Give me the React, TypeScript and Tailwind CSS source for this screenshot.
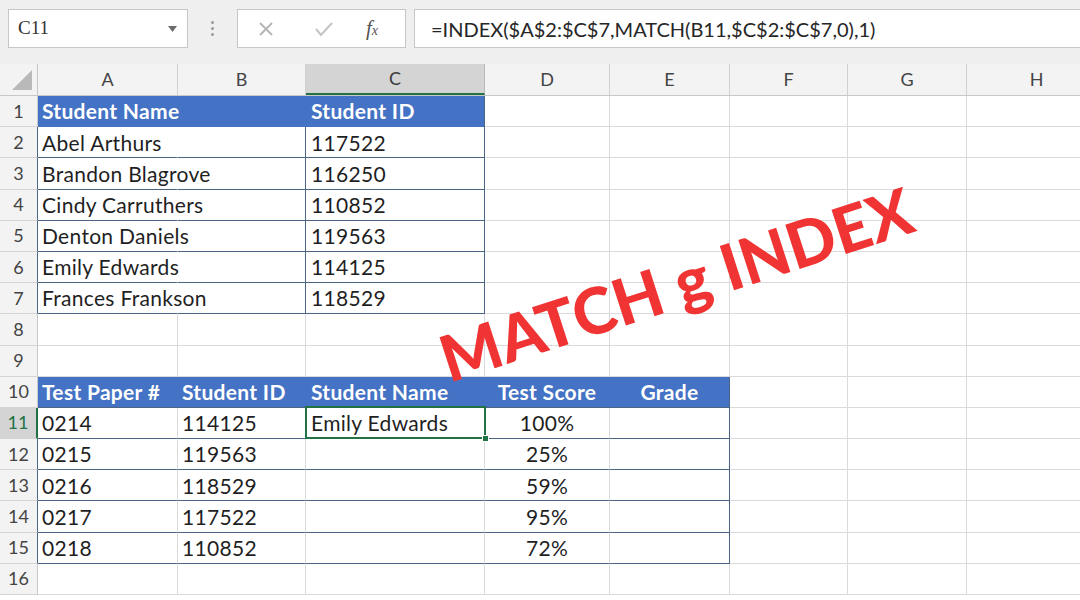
import React from 'react';

type CellDef = {
  t?: string;
  center?: boolean;
  head?: boolean;
  r?: 'grid' | 'tbl' | 'blue' | 'white';
  b?: 'grid' | 'tbl' | 'blue';
};

const colW = ['w-[140px]', 'w-[128px]', 'w-[179px]', 'w-[125px]', 'w-[120px]', 'w-[118px]', 'w-[119px]', 'w-[140px]'];
const letters = ['A', 'B', 'C', 'D', 'E', 'F', 'G', 'H'];

const rColor: Record<string, string> = {
  grid: 'border-r-[#dadada]',
  tbl: 'border-r-[#4d6584]',
  blue: 'border-r-[#4472c4]',
  white: 'border-r-white',
};
const bColor: Record<string, string> = {
  grid: 'border-b-[#dadada]',
  tbl: 'border-b-[#4d6584]',
  blue: 'border-b-[#4472c4]',
};

const names = ['Abel Arthurs', 'Brandon Blagrove', 'Cindy Carruthers', 'Denton Daniels', 'Emily Edwards', 'Frances Frankson'];
const ids = ['117522', '116250', '110852', '119563', '114125', '118529'];
const papers = ['0214', '0215', '0216', '0217', '0218'];
const sids = ['114125', '119563', '118529', '117522', '110852'];
const scores = ['100%', '25%', '59%', '95%', '72%'];

type RowDef = { cells: CellDef[]; hdr: 'grid' | 'tbl' | 'sel' };

function buildRows(): RowDef[] {
  const rows: RowDef[] = [];
  const empty = (): CellDef[] => letters.map(() => ({}));
  const r1 = empty();
  r1[0] = { t: 'Student Name', head: true, r: 'blue', b: 'blue' };
  r1[1] = { head: true, r: 'blue', b: 'blue' };
  r1[2] = { t: 'Student ID', head: true, r: 'tbl', b: 'blue' };
  rows.push({ cells: r1, hdr: 'grid' });
  for (let i = 0; i < 6; i++) {
    const r = empty();
    r[0] = { t: names[i], r: 'white', b: 'tbl' };
    r[1] = { r: 'tbl', b: 'tbl' };
    r[2] = { t: ids[i], r: 'tbl', b: 'tbl' };
    rows.push({ cells: r, hdr: 'tbl' });
  }
  rows.push({ cells: empty(), hdr: 'grid' });
  rows.push({ cells: empty(), hdr: 'grid' });
  const r10 = empty();
  r10[0] = { t: 'Test Paper #', head: true, r: 'blue', b: 'tbl' };
  r10[1] = { t: 'Student ID', head: true, r: 'blue', b: 'tbl' };
  r10[2] = { t: 'Student Name', head: true, r: 'blue', b: 'tbl' };
  r10[3] = { t: 'Test Score', head: true, center: true, r: 'blue', b: 'tbl' };
  r10[4] = { t: 'Grade', head: true, center: true, r: 'tbl', b: 'tbl' };
  rows.push({ cells: r10, hdr: 'grid' });
  for (let i = 0; i < 5; i++) {
    const r = empty();
    r[0] = { t: papers[i], r: 'grid', b: 'tbl' };
    r[1] = { t: sids[i], r: 'grid', b: 'tbl' };
    r[2] = { t: i === 0 ? 'Emily Edwards' : undefined, r: 'grid', b: 'tbl' };
    r[3] = { t: scores[i], center: true, r: 'grid', b: 'tbl' };
    r[4] = { r: 'tbl', b: 'tbl' };
    rows.push({ cells: r, hdr: i === 0 ? 'sel' : 'tbl' });
  }
  rows.push({ cells: empty(), hdr: 'grid' });
  return rows;
}

function Toolbar() {
  return (
    <div className="h-[64px] bg-[#efefef] flex items-start pt-[9px] shrink-0">
      <div className="ml-[8px] w-[180px] h-[39px] shrink-0 bg-white border border-[#c6c6c6] flex items-center justify-between pl-[9px] pr-[10px]">
        <span className="text-[19px] text-[#333] font-['Liberation_Serif',serif]">C11</span>
        <svg width="9" height="6" viewBox="0 0 9 6"><path d="M0 0 L9 0 L4.5 6 Z" fill="#6b6b6b" /></svg>
      </div>
      <div className="w-[49px] h-[39px] shrink-0 flex flex-col items-center justify-center gap-[3px]">
        <div className="w-[3px] h-[3px] rounded-full bg-[#9a9a9a]" />
        <div className="w-[3px] h-[3px] rounded-full bg-[#9a9a9a]" />
        <div className="w-[3px] h-[3px] rounded-full bg-[#9a9a9a]" />
      </div>
      <div className="w-[169px] h-[39px] shrink-0 bg-white border border-[#c6c6c6] flex items-center">
        <svg className="ml-[20px]" width="16" height="16" viewBox="0 0 16 16"><path d="M2 2 L14 14 M14 2 L2 14" stroke="#b4b4b4" strokeWidth="1.8" /></svg>
        <svg className="ml-[40px]" width="20" height="16" viewBox="0 0 20 16"><path d="M2 8 L7 14 L18 2" stroke="#c4c4c4" strokeWidth="2" fill="none" /></svg>
        <span className="ml-[32px] text-[21px] italic text-[#555] font-['Liberation_Serif',serif] leading-none">f<span className="text-[14px]">x</span></span>
      </div>
      <div className="ml-[8px] flex-1 h-[39px] bg-white border border-[#c6c6c6] border-r-0 flex items-center pl-[16px]">
        <span className="text-[20px] text-[#262626] font-['Lato',sans-serif]">=INDEX($A$2:$C$7,MATCH(B11,$C$2:$C$7,0),1)</span>
      </div>
    </div>
  );
}

function ColHeader() {
  return (
    <div className="flex h-[32px] shrink-0 bg-[#f3f3f3] border-b border-[#c8c8c8]">
      <div className="w-[38px] h-full shrink-0 border-r border-[#c8c8c8] flex items-end justify-end pr-[5px] pb-[5px]">
        <svg width="20" height="20" viewBox="0 0 20 20"><path d="M20 0 L20 20 L0 20 Z" fill="#b9b9b9" /></svg>
      </div>
      {letters.map((l, i) => (
        <div
          key={l}
          className={`${colW[i]} h-full flex items-center justify-center text-[18px] shrink-0 ${
            i === 2
              ? 'bg-[#d4d4d4] text-[#3a3a3a] border-b-2 border-b-[#217346] border-r border-r-[#b8b8b8]'
              : 'text-[#444] border-r border-r-[#d0d0d0]'
          }`}
        >
          {l}
        </div>
      ))}
    </div>
  );
}

export default function App() {
  const rows = buildRows();
  return (
    <div className="w-[1080px] h-[600px] overflow-hidden bg-white relative flex flex-col font-['Lato',sans-serif]">
      <Toolbar />
      <ColHeader />
      <div className="flex flex-col">
        {rows.map((row, ri) => (
          <div key={ri} className="flex h-[31.2px] shrink-0">
            <div
              className={`w-[38px] h-full shrink-0 flex items-center justify-center text-[18px] border-b border-b-[#d4d4d4] ${
                row.hdr === 'sel'
                  ? 'bg-[#d4d4d4] text-[#217346] border-r-2 border-r-[#217346]'
                  : row.hdr === 'tbl'
                  ? 'bg-[#f3f3f3] text-[#444] border-r border-r-[#4d6584]'
                  : 'bg-[#f3f3f3] text-[#444] border-r border-r-[#c8c8c8]'
              }`}
            >
              {ri + 1}
            </div>
            {row.cells.map((c, ci) => {
              const isSel = ri === 10 && ci === 2;
              return (
                <div
                  key={ci}
                  className={`${colW[ci]} h-full shrink-0 relative flex items-center border-r border-b whitespace-nowrap ${
                    rColor[c.r || 'grid']
                  } ${bColor[c.b || 'grid']} ${
                    c.head ? 'bg-[#4472c4] text-white font-bold' : 'bg-white text-[#1f1f1f]'
                  } ${c.center ? 'justify-center' : ci === 2 ? 'pl-[5px]' : 'pl-[4px]'} text-[21px] tracking-[0.3px]`}
                >
                  {c.t && <span className="relative z-10">{c.t}</span>}
                  {isSel && (
                    <>
                      <div className="absolute left-[-1px] top-[-2px] right-[-2px] bottom-[-1px] border-2 border-[#217346] pointer-events-none z-20" />
                      <div className="absolute right-[-5px] bottom-[-4px] w-[7px] h-[7px] bg-[#217346] border border-white z-30" />
                    </>
                  )}
                </div>
              );
            })}
          </div>
        ))}
      </div>
      <div className="absolute left-[676px] top-[284px] -translate-x-1/2 -translate-y-1/2 -rotate-[18deg] whitespace-nowrap text-[#f03434] font-black text-[64px] leading-[0.75] font-['Lato',sans-serif] pointer-events-none z-40">
        MATCH g INDEX
      </div>
    </div>
  );
}
